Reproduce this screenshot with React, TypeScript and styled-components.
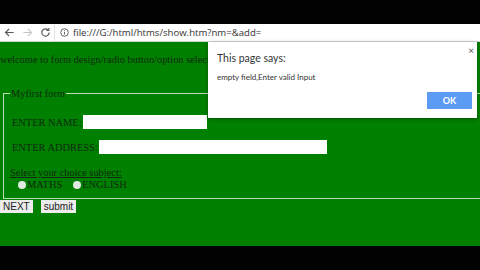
import React from 'react'
import styled, { createGlobalStyle } from 'styled-components'

const GlobalStyle = createGlobalStyle`
  html, body {
    margin: 0;
    padding: 0;
    background: #000;
  }
`

const Screen = styled.div`
  position: relative;
  width: 480px;
  height: 270px;
  overflow: hidden;
  background: #020202;
  display: flex;
  flex-direction: column;
`

const TopBand = styled.div`
  height: 24px;
  background: #020202;
`

const Toolbar = styled.div`
  height: 17px;
  background: #fff;
  border-bottom: 1px solid #d4d4d4;
  display: flex;
  align-items: center;
`

const NavButton = styled.div<{ $muted?: boolean }>`
  width: 18px;
  height: 17px;
  display: flex;
  align-items: center;
  justify-content: center;
  color: ${(p) => (p.$muted ? '#c8c8c8' : '#5a5a5a')};
`

const AddressBox = styled.div`
  flex: 1;
  height: 17px;
  display: flex;
  align-items: center;
  gap: 4px;
  padding-left: 5px;
  border-left: 1px solid #e4e4e4;
  font-family: 'Open Sans', 'Liberation Sans', sans-serif;
  font-size: 9.6px;
  color: #333;
  white-space: nowrap;
`

const Page = styled.div`
  height: 204px;
  background: #008000;
  font-family: 'Liberation Serif', serif;
  font-size: 10.4px;
  color: #0f2a0f;
  padding-top: 11px;
  box-sizing: border-box;
`

const Welcome = styled.div`
  line-height: 13px;
  white-space: nowrap;
`

const FieldSet = styled.fieldset`
  margin: 21px 0 0 3px;
  padding: 15px 0 7px 6px;
  border: 1px solid #b9dcb9;
  border-right: none;
  line-height: 13px;
`

const Legend = styled.legend`
  padding: 0 1px;
  margin-left: 0;
  color: #0f2a0f;
`

const Row = styled.div<{ $top?: number }>`
  display: flex;
  align-items: center;
  margin-top: ${(p) => p.$top ?? 0}px;
  padding-left: 2px;
  white-space: nowrap;
`

const TextInput = styled.div<{ $width: number }>`
  width: ${(p) => p.$width}px;
  height: 14px;
  background: #fff;
  margin-left: 1px;
`

const Caption = styled.div`
  text-decoration: underline;
  margin-top: 12px;
`

const RadioRow = styled.div`
  display: flex;
  align-items: center;
  padding-left: 8px;
  gap: 11px;
  margin-top: -1px;
`

const RadioOption = styled.label`
  display: flex;
  align-items: center;
`

const RadioDot = styled.span`
  width: 8px;
  height: 8px;
  border-radius: 50%;
  background: #dfe9df;
  margin-right: 1px;
`

const ButtonRow = styled.div`
  display: flex;
  gap: 8px;
  margin-top: 1px;
`

const PageButton = styled.div`
  height: 13px;
  padding: 0 3px;
  background: #ececec;
  font-family: 'Liberation Sans', Arial, sans-serif;
  font-size: 10px;
  line-height: 13px;
  color: #222;
`

const BottomBand = styled.div`
  flex: 1;
  background: #020202;
`

const Dialog = styled.div`
  position: absolute;
  left: 208px;
  top: 42px;
  width: 269px;
  height: 76px;
  background: #fff;
  box-shadow: 0 1px 4px rgba(0, 0, 0, 0.35);
  font-family: Lato, 'Open Sans', sans-serif;
  color: #333;
  box-sizing: border-box;
  padding: 9px 0 0 9px;
`

const DialogTitle = styled.div`
  font-size: 10.5px;
  line-height: 14px;
`

const DialogMessage = styled.div`
  font-size: 8px;
  line-height: 12px;
  margin-top: 6px;
`

const CloseMark = styled.div`
  position: absolute;
  right: 3px;
  top: 2px;
  font-size: 10px;
  color: #555;
`

const OkButton = styled.div`
  position: absolute;
  right: 5px;
  bottom: 9px;
  width: 45px;
  height: 17px;
  background: #5b9bf3;
  color: #fff;
  font-size: 9px;
  font-weight: 700;
  display: flex;
  align-items: center;
  justify-content: center;
`

const App: React.FC = () => {
  return <>
    <GlobalStyle />
    <Screen>
      <TopBand />
      <Toolbar>
        <NavButton>
          <svg width='11' height='11' viewBox='0 0 12 12' fill='none' stroke='currentColor' strokeWidth='1.3'>
            <path d='M10.5 6H1.8M5.5 2.2L1.7 6l3.8 3.8' />
          </svg>
        </NavButton>
        <NavButton $muted>
          <svg width='11' height='11' viewBox='0 0 12 12' fill='none' stroke='currentColor' strokeWidth='1.3'>
            <path d='M1.5 6h8.7M6.5 2.2L10.3 6 6.5 9.8' />
          </svg>
        </NavButton>
        <NavButton>
          <svg width='11' height='11' viewBox='0 0 12 12' fill='none' stroke='currentColor' strokeWidth='1.3'>
            <path d='M10 6a4 4 0 1 1-1.2-2.9' />
            <path d='M9.6 1.2v2.6H7' />
          </svg>
        </NavButton>
        <AddressBox>
          <svg width='9' height='9' viewBox='0 0 10 10' fill='none' stroke='#555' strokeWidth='1'>
            <circle cx='5' cy='5' r='4.2' />
            <path d='M5 4.3v3M5 2.6v0.8' />
          </svg>
          file:///G:/html/htms/show.htm?nm=&amp;add=
        </AddressBox>
      </Toolbar>
      <Page>
        <Welcome>welcome to form design/radio button/option select</Welcome>
        <FieldSet>
          <Legend>Myfirst form</Legend>
          <Row>
            ENTER NAME:
            <TextInput $width={124} />
          </Row>
          <Row $top={11}>
            ENTER ADDRESS:
            <TextInput $width={228} />
          </Row>
          <Caption>Select your choice subject:</Caption>
          <RadioRow>
            <RadioOption><RadioDot />MATHS</RadioOption>
            <RadioOption><RadioDot />ENGLISH</RadioOption>
          </RadioRow>
        </FieldSet>
        <ButtonRow>
          <PageButton>NEXT</PageButton>
          <PageButton>submit</PageButton>
        </ButtonRow>
      </Page>
      <BottomBand />
      <Dialog>
        <CloseMark>×</CloseMark>
        <DialogTitle>This page says:</DialogTitle>
        <DialogMessage>empty field,Enter valid Input</DialogMessage>
        <OkButton>OK</OkButton>
      </Dialog>
    </Screen>
  </>
}

export default App
